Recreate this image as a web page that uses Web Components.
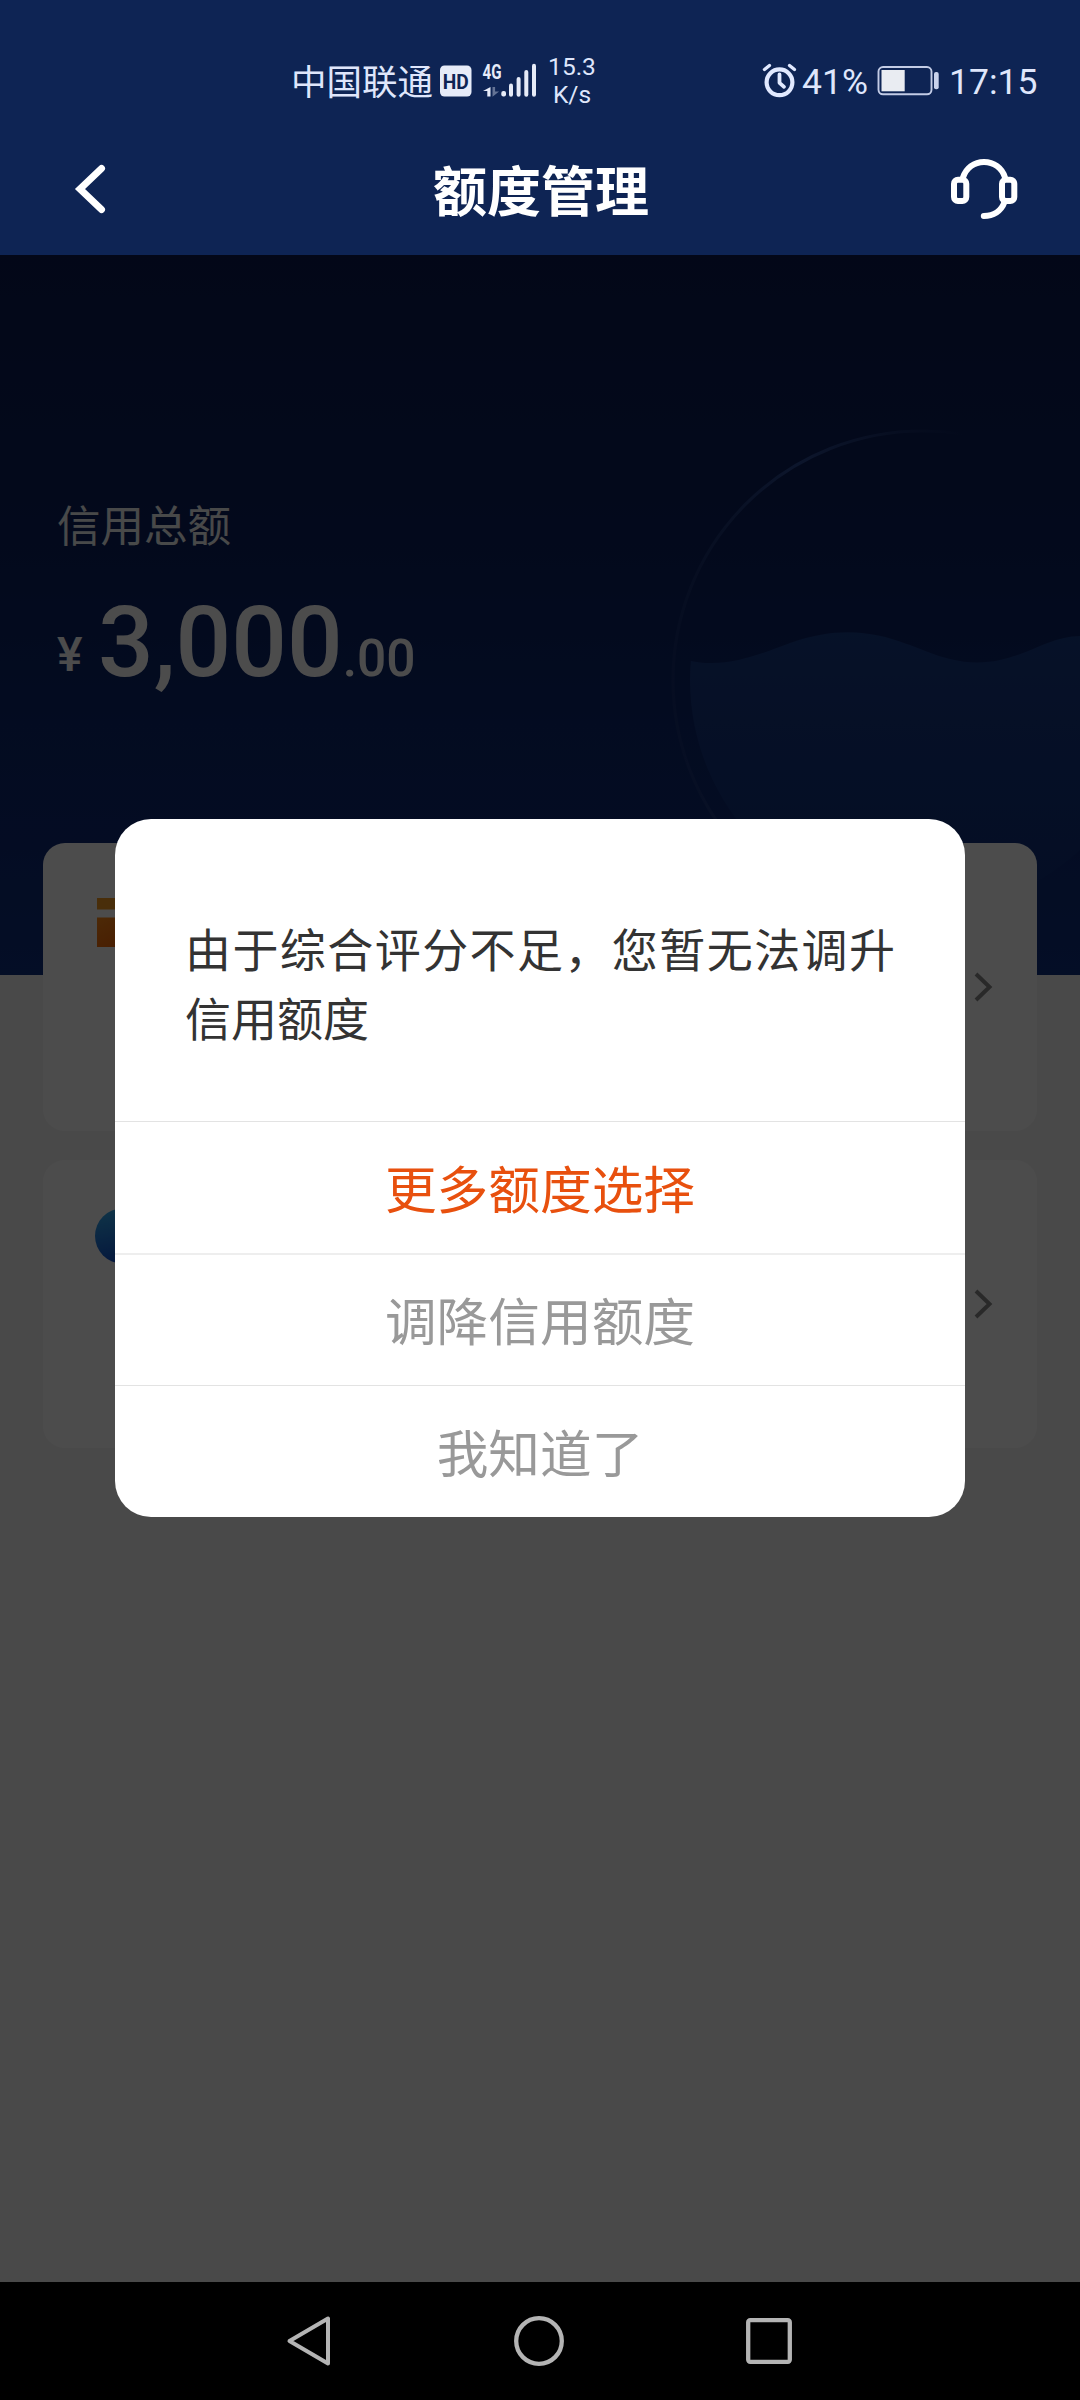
<!DOCTYPE html>
<html lang="zh-CN">
<head>
<meta charset="utf-8">
<meta name="viewport" content="width=1080">
<title>额度管理</title>
<style>
  html, body { margin: 0; padding: 0; background: #000; }
  body { width: 1080px; height: 2400px; overflow: hidden; font-family: Roboto, "Noto Sans CJK SC", sans-serif; }
</style>
</head>
<body>
<phone-screen>
  <status-bar slot="top"></status-bar>
  <nav-header slot="top">额度管理</nav-header>
  <credit-hero slot="page" label="信用总额" amount="3,000" cents=".00"></credit-hero>
  <card-list slot="page">
    <option-card icon="box"></option-card>
    <option-card icon="dot"></option-card>
  </card-list>
  <alert-dialog slot="dialog">
    由于综合评分不足，您暂无法调升信用额度
    <dialog-action slot="actions" primary>更多额度选择</dialog-action>
    <dialog-action slot="actions" thick>调降信用额度</dialog-action>
    <dialog-action slot="actions">我知道了</dialog-action>
  </alert-dialog>
  <system-nav slot="bottom"></system-nav>
</phone-screen>

<script>
const define = (name, render) => customElements.define(name, class extends HTMLElement {
  constructor() {
    super();
    const root = this.attachShadow({ mode: 'open' });
    const t = document.createElement('template');
    t.innerHTML = render(this);
    root.append(t.content.cloneNode(true));
  }
});

define('phone-screen', () => `
<style>
  :host { display: flex; flex-direction: column; width: 1080px; height: 2400px; overflow: hidden; }
  header { height: 255px; background: #0e2454; display: flex; flex-direction: column; flex: none; }
  main { flex: 1; display: grid; grid-template: minmax(0, 1fr) / minmax(0, 1fr); overflow: hidden; background: #f6f6f6; }
  .page, .mask { grid-area: 1 / 1; }
  .mask { z-index: 1; background: rgba(0,0,0,.7); display: flex; justify-content: center; align-items: flex-start; padding-top: 564px; }
</style>
<header><slot name="top"></slot></header>
<main>
  <div class="page"><slot name="page"></slot></div>
  <div class="mask"><slot name="dialog"></slot></div>
</main>
<slot name="bottom"></slot>`);

define('status-bar', () => `
<style>
  :host { display: flex; align-items: center; height: 126px; box-sizing: border-box; padding: 36px 42px 0 291px; color: #dfe6fb; }
  svg, span { display: block; flex: none; white-space: nowrap; }
  .op { font-size: 35.500px; line-height: 40px; width: 148px; padding-top: 3px; }
  .rate { font-size: 24.500px; line-height: 28px; width: 60px; text-align: center; margin-left: -1px; }
  .right { margin-left: auto; display: flex; align-items: center; }
  .num { font-size: 35.500px; line-height: 40px; padding-top: 1px; }
</style>
<span class="op">中国联通</span>
<svg width="33" height="32" viewBox="0 0 33 32"><rect x="1" y=".5" width="31.500" height="31" rx="4.500" fill="#e6ebf8"/><text x="16.700" y="23.500" text-anchor="middle" font-size="20" font-weight="700" textLength="26" lengthAdjust="spacingAndGlyphs" fill="#0e2454">HD</text></svg>
<svg style="margin-left:6px" width="65" height="56" viewBox="478 52 65 56" fill="#e6ebf8">
  <text x="482.500" y="77.500" font-size="20" font-weight="700" textLength="19" lengthAdjust="spacingAndGlyphs">4G</text>
  <path d="M490.500 86v9.500h-3.200v-5.500h-4.300z"/><path d="M492.500 86h2.600v4.500h4l-6.600 5.200z" opacity=".4"/>
  <rect x="501.300" y="90" width="4.700" height="5.500" rx="2"/><rect x="509" y="82.500" width="4" height="13.200" rx="2"/><rect x="516.600" y="76" width="4" height="19.700" rx="2"/><rect x="524.300" y="69" width="4" height="26.700" rx="2"/><rect x="532" y="62.700" width="4" height="33" rx="2"/>
</svg>
<span class="rate">15.3<br>K/s</span>
<div class="right">
  <svg width="35" height="36" viewBox="762 62 35 36" fill="none" stroke="#e1e9ff" stroke-linecap="round" stroke-linejoin="round"><circle cx="779.500" cy="81.300" r="12.900" stroke-width="4.200"/><path d="M779.500 73.500v8.300l4.500 4" stroke-width="3.800"/><path d="M764.500 68.500l5-4M794.500 68.500l-5-4" stroke-width="3.400"/></svg>
  <span class="num" style="width:66px;margin-left:5px">41%</span>
  <svg style="margin-left:9px" width="62" height="32" viewBox="877 65 62 32" fill="none"><rect x="878.500" y="67" width="53" height="27.300" rx="4.500" stroke="#c3cce6" stroke-width="1.900"/><rect x="881.500" y="70" width="23.200" height="21.300" fill="#e9ecf2"/><rect x="934" y="72" width="4.700" height="17.300" rx="2" fill="#c9d2ec"/></svg>
  <span class="num" style="width:89px;margin-left:10px">17:15</span>
</div>`);

define('nav-header', () => `
<style>
  :host { display: flex; align-items: center; justify-content: space-between; height: 126px; padding: 0 58px 0 70px; color: #fff; }
  h1 { margin: 0 10px 0 0; font: 700 54px/64px "Noto Sans CJK SC", sans-serif; padding-bottom: 1px; }
  svg { display: block; }
</style>
<svg width="75" height="60" viewBox="70 159 75 60" fill="none" stroke="#fff" stroke-width="7" stroke-linecap="round" stroke-linejoin="miter"><path d="M101.500 168.500L80 189l21.500 20.500"/></svg>
<h1><slot></slot></h1>
<svg width="75" height="64" viewBox="947 157 75 64" fill="none" stroke="#fff" stroke-width="6" stroke-linecap="round"><path d="M963 177.500c3-9.500 11.200-15.600 21-15.600s18.200 6.100 21 15.600"/><rect x="954" y="179.700" width="12.300" height="21.300" rx="4"/><rect x="1002" y="179.700" width="12.300" height="21.300" rx="4"/><path d="M1004.500 202c-3.200 9-11.300 14-20.700 14"/></svg>`);

define('credit-hero', el => `
<style>
  :host { display: grid; height: 720px; background: linear-gradient(#0a1a52 0%, #0b215f 40%, #0d276e 65%, #0f2f80 100%); }
  svg, .info { grid-area: 1 / 1; }
  .info { display: flex; flex-direction: column; padding: 245px 0 0 57px; color: #fff; }
  .label { font-size: 43.500px; line-height: 56px; opacity: .95; }
  .sum { display: flex; align-items: baseline; font-weight: 500; line-height: 116px; margin-top: 29px; }
  .cur { font-size: 48px; line-height: 50px; width: 41px; align-self: flex-end; padding-bottom: 37px; }
  .int { font-size: 98px; }
  .dec { font-size: 51.500px; }
</style>
<svg width="1080" height="720" viewBox="0 255 1080 720" fill="none">
  <defs>
    <linearGradient id="rim" x1="0" y1="0" x2="1" y2="0"><stop offset="0" stop-color="#294181" stop-opacity=".3"/><stop offset=".25" stop-color="#2b4a94"/><stop offset=".6" stop-color="#294181" stop-opacity="0"/></linearGradient>
    <linearGradient id="sea" x1="0" y1="0" x2="0" y2="1"><stop offset="0" stop-color="#173c86"/><stop offset="1" stop-color="#113180" stop-opacity=".5"/></linearGradient>
    <clipPath id="disc"><circle cx="922" cy="680" r="232"/></clipPath>
  </defs>
  <circle cx="922" cy="680" r="249" stroke="url(#rim)" stroke-width="3"/>
  <path clip-path="url(#disc)" fill="url(#sea)" d="M680 658C720 672 760 654 790 643C870 615 910 650 950 659C1010 674 1040 636 1080 636V930H680z"/>
</svg>
<div class="info">
  <div class="label">${el.getAttribute('label')}</div>
  <div class="sum"><span class="cur">¥</span><span class="int">${el.getAttribute('amount')}</span><span class="dec">${el.getAttribute('cents')}</span></div>
</div>`);

define('card-list', () => `
<style>
  :host { display: flex; flex-direction: column; gap: 29px; margin: -132px 43px 0; position: relative; }
</style>
<slot></slot>`);

const cardIcons = {
  box: `<svg width="60" height="52" viewBox="0 0 60 52"><defs><linearGradient id="g" x1="0" y1="0" x2="1" y2="1"><stop offset="0" stop-color="#ff8a18"/><stop offset="1" stop-color="#ee5500"/></linearGradient></defs><rect x="2" y="0" width="56" height="11.500" fill="#f59a24"/><rect x="2" y="19.500" width="56" height="29.500" fill="url(#g)"/></svg>`,
  dot: `<svg width="60" height="56" viewBox="0 0 60 56"><defs><linearGradient id="g" x1=".2" y1="0" x2=".4" y2="1"><stop offset="0" stop-color="#35aef0"/><stop offset="1" stop-color="#0f4ecc"/></linearGradient></defs><circle cx="27.500" cy="28" r="27.500" fill="url(#g)"/></svg>`
};
define('option-card', el => `
<style>
  :host { display: flex; justify-content: space-between; align-items: center; box-sizing: border-box; height: 288px; padding: 0 44px 0 52px; border-radius: 22px; background: #fff; }
  .ic { align-self: flex-start; padding-top: ${el.getAttribute('icon') === 'box' ? 55 : 48}px; }
  svg { display: block; }
</style>
<div class="ic">${cardIcons[el.getAttribute('icon')]}</div>
<svg width="20" height="32" viewBox="0 0 20 32" fill="none" stroke="#8b8b8b" stroke-width="4"><path d="M3 3l13.500 13L3 29"/></svg>`);

define('alert-dialog', () => `
<style>
  :host { display: flex; flex-direction: column; width: 850px; height: 698px; border-radius: 36px; background: #fff; overflow: hidden; color: #333; }
  .msg { box-sizing: border-box; height: 302px; padding: 98px 70px 0; font-size: 46px; line-height: 69px; text-align: justify; }
</style>
<div class="msg"><slot></slot></div>
<slot name="actions"></slot>`);

define('dialog-action', () => `
<style>
  :host { display: flex; align-items: center; justify-content: center; box-sizing: border-box; height: 132px; border-top: 1px solid #e3e3e3; font-size: 51.700px; line-height: 70px; color: #999; padding-top: 8px; }
  :host([thick]) { border-top: 2px solid #eee; }
  :host([primary]) { color: #e8500e; }
</style>
<slot></slot>`);

define('system-nav', () => `
<style>
  :host { display: flex; align-items: center; justify-content: space-between; box-sizing: border-box; height: 118px; flex: none; padding: 0 287px 0 285px; background: #000; }
  svg { display: block; }
</style>
<svg width="48" height="54" viewBox="285 2314 48 54" fill="none" stroke="#b4b4b4" stroke-width="4" stroke-linejoin="round"><path d="M289.500 2341L328 2318.500v45z"/></svg>
<svg width="54" height="54" viewBox="513 2314 54 54" fill="none" stroke="#b4b4b4" stroke-width="4.300"><circle cx="540" cy="2341" r="22.800"/></svg>
<svg width="48" height="54" viewBox="745 2314 48 54" fill="none" stroke="#b4b4b4" stroke-width="4.300"><rect x="748.200" y="2320.200" width="41.600" height="41.600" rx="2"/></svg>`);
</script>
</body>
</html>
